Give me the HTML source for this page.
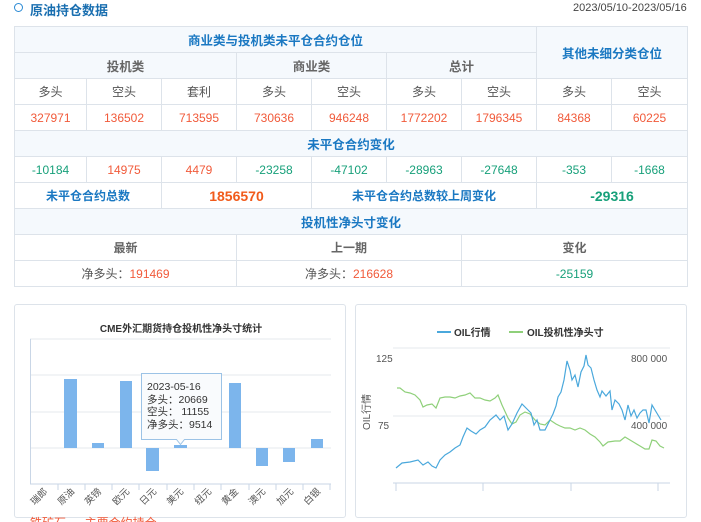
<!DOCTYPE html><html><head><meta charset="utf-8"><style>
*{margin:0;padding:0;box-sizing:border-box}
body{width:701px;height:522px;background:#fff;font-family:"Liberation Sans","Noto Sans CJK SC",sans-serif;position:relative;overflow:hidden}
.t{position:absolute;left:14px;top:26px;border-collapse:collapse;table-layout:fixed}
.t td{border:1px solid #dde3ea;height:26px;text-align:center;font-size:12px;color:#555;padding:0}
.t td.h{background:#f5f9fd;color:#1a78c2;font-weight:bold;font-size:12.5px}
.t td.hg{background:#f5f9fd;color:#666;font-weight:bold;font-size:12.5px}
.t td.g{color:#666;font-weight:bold}
.t td.r,.r{color:#f15a3a}
.t td.gr{color:#17a07a}
.box{position:absolute;border:1px solid #dde3ea;border-radius:3px;background:#fff}
</style></head><body>
<div style="position:absolute;left:14px;top:3px;width:9px;height:9px;border:1.5px solid #2a8ad4;border-radius:50%"></div>
<div style="position:absolute;left:30px;top:0;font-size:13px;font-weight:bold;color:#1a6fb0">原油持仓数据</div>
<div style="position:absolute;left:573px;top:2px;font-size:11px;color:#444">2023/05/10-2023/05/16</div>
<table class="t">
<colgroup><col style="width:72px"><col style="width:75px"><col style="width:75px"><col style="width:75px"><col style="width:75px"><col style="width:75px"><col style="width:75px"><col style="width:75px"><col style="width:76px"></colgroup>
<tr><td class="h" colspan="7">商业类与投机类未平仓合约仓位</td><td class="h" colspan="2" rowspan="2">其他未细分类仓位</td></tr>
<tr><td class="hg" colspan="3">投机类</td><td class="hg" colspan="2">商业类</td><td class="hg" colspan="2">总计</td></tr>
<tr><td>多头</td><td>空头</td><td>套利</td><td>多头</td><td>空头</td><td>多头</td><td>空头</td><td>多头</td><td>空头</td></tr>
<tr><td class="r">327971</td><td class="r">136502</td><td class="r">713595</td><td class="r">730636</td><td class="r">946248</td><td class="r">1772202</td><td class="r">1796345</td><td class="r">84368</td><td class="r">60225</td></tr>
<tr><td class="h" colspan="9">未平仓合约变化</td></tr>
<tr><td class="gr">-10184</td><td class="r">14975</td><td class="r">4479</td><td class="gr">-23258</td><td class="gr">-47102</td><td class="gr">-28963</td><td class="gr">-27648</td><td class="gr">-353</td><td class="gr">-1668</td></tr>
<tr><td colspan="2" style="color:#1a78c2;font-weight:bold">未平仓合约总数</td><td colspan="2" style="color:#f15a1a;font-weight:bold;font-size:14px">1856570</td><td colspan="3" style="color:#1a78c2;font-weight:bold">未平仓合约总数较上周变化</td><td colspan="2" style="color:#17a07a;font-weight:bold;font-size:14px">-29316</td></tr>
<tr><td class="h" colspan="9">投机性净头寸变化</td></tr>
<tr><td colspan="3" class="g">最新</td><td colspan="3" class="g">上一期</td><td colspan="3" class="g">变化</td></tr>
<tr><td colspan="3">净多头：<span class="r">191469</span></td><td colspan="3">净多头：<span class="r">216628</span></td><td colspan="3" class="gr">-25159</td></tr>
</table>

<div class="box" style="left:14px;top:304px;width:332px;height:214px"></div>
<div class="box" style="left:355px;top:304px;width:332px;height:214px"></div>
<svg style="position:absolute;left:0;top:0" width="701" height="522">
<g font-family="Liberation Sans,Noto Sans CJK SC,sans-serif">
<text x="181" y="332" font-size="10" font-weight="bold" fill="#333" text-anchor="middle">CME外汇期货持仓投机性净头寸统计</text>
<g stroke="#e6e9ee"><line x1="30" y1="339" x2="331" y2="339"/><line x1="30" y1="375" x2="331" y2="375"/><line x1="30" y1="412" x2="331" y2="412"/><line x1="30" y1="448" x2="331" y2="448"/></g>
<line x1="30.5" y1="339" x2="30.5" y2="484" stroke="#c9d6e6"/>
<line x1="30" y1="484" x2="331" y2="484" stroke="#c9d6e6"/>
<g stroke="#c9d6e6"><line x1="58" y1="484" x2="58" y2="490"/><line x1="85" y1="484" x2="85" y2="490"/><line x1="112" y1="484" x2="112" y2="490"/><line x1="139" y1="484" x2="139" y2="490"/><line x1="167" y1="484" x2="167" y2="490"/><line x1="194" y1="484" x2="194" y2="490"/><line x1="221" y1="484" x2="221" y2="490"/><line x1="249" y1="484" x2="249" y2="490"/><line x1="276" y1="484" x2="276" y2="490"/><line x1="303" y1="484" x2="303" y2="490"/><line x1="330" y1="484" x2="330" y2="490"/></g>
<g fill="#7cb5ec">
<rect x="64" y="379" width="13" height="69"/><rect x="92" y="443" width="12" height="5"/><rect x="120" y="381" width="12" height="67"/><rect x="146" y="448" width="13" height="23"/><rect x="174" y="445" width="13" height="3"/><rect x="229" y="383" width="12" height="65"/><rect x="256" y="448" width="12" height="18"/><rect x="283" y="448" width="12" height="14"/><rect x="311" y="439" width="12" height="9"/></g>
<g font-size="9.5" fill="#555">
<text transform="translate(48,492) rotate(-45)" text-anchor="end">瑞郎</text>
<text transform="translate(75,492) rotate(-45)" text-anchor="end">原油</text>
<text transform="translate(102,492) rotate(-45)" text-anchor="end">英镑</text>
<text transform="translate(130,492) rotate(-45)" text-anchor="end">欧元</text>
<text transform="translate(157,492) rotate(-45)" text-anchor="end">日元</text>
<text transform="translate(184,492) rotate(-45)" text-anchor="end">美元</text>
<text transform="translate(212,492) rotate(-45)" text-anchor="end">纽元</text>
<text transform="translate(239,492) rotate(-45)" text-anchor="end">黄金</text>
<text transform="translate(266,492) rotate(-45)" text-anchor="end">澳元</text>
<text transform="translate(294,492) rotate(-45)" text-anchor="end">加元</text>
<text transform="translate(321,492) rotate(-45)" text-anchor="end">白银</text></g>
<path d="M141.5 373.5h80v66h-37l-4 5-4-5h-35z" fill="#f9fbfd" stroke="#9cc3e6"/>
<g font-size="10.5" fill="#333"><text x="147" y="390">2023-05-16</text><text x="147" y="403">多头：20669</text><text x="147" y="415">空头： 11155</text><text x="147" y="428">净多头：9514</text></g>

<line x1="437" y1="332" x2="451" y2="332" stroke="#4aa8dc" stroke-width="2"/>
<text x="454" y="336" font-size="10" font-weight="bold" fill="#333">OIL行情</text>
<line x1="509" y1="332" x2="523" y2="332" stroke="#8fd07a" stroke-width="2"/>
<text x="527" y="336" font-size="10" font-weight="bold" fill="#333">OIL投机性净头寸</text>
<line x1="393" y1="348" x2="670" y2="348" stroke="#e6e9ee"/>
<line x1="393" y1="416" x2="670" y2="416" stroke="#e6e9ee"/>
<line x1="393" y1="483" x2="670" y2="483" stroke="#c9d6e6"/>
<g stroke="#c9d6e6"><line x1="396" y1="483" x2="396" y2="491"/><line x1="483" y1="483" x2="483" y2="491"/><line x1="571" y1="483" x2="571" y2="491"/><line x1="658" y1="483" x2="658" y2="491"/></g>
<g font-size="10" fill="#555"><text x="376" y="362">125</text><text x="378" y="429">75</text><text x="631" y="362">800 000</text><text x="631" y="429">400 000</text>
<text transform="translate(370,430) rotate(-90)">OIL行情</text></g>
<polyline fill="none" stroke="#8fd07a" stroke-width="1.2" points="397,388 400,388 405,392 410,393 415,395 420,400 423,407 427,405 432,404 436,408 440,398 445,397 450,397 455,398 460,396 465,395 470,393 475,398 480,398 485,400 490,401 495,398 498,395 502,405 508,418 512,424 516,422 520,415 525,412 530,414 535,420 540,424 545,425 550,420 556,424 560,426 565,428 570,428 575,430 580,428 585,430 590,434 595,437 600,442 603,446 608,442 615,441 620,441 625,437 630,440 635,443 640,446 645,449 649,449 652,440 656,441 660,446 664,448"/>
<polyline fill="none" stroke="#4aa8dc" stroke-width="1.2" points="396,468 402,463 410,462 418,460 423,465 428,462 432,466 436,468 440,460 445,455 450,452 455,448 460,445 463,437 467,428 471,431 476,434 480,430 485,427 490,420 496,415 500,420 504,416 508,430 512,424 517,413 522,404 527,409 531,413 534,425 537,420 540,430 545,430 550,420 553,414 556,406 558,397 561,392 564,380 567,361 570,370 572,380 575,375 578,387 581,372 584,366 586,355 588,365 591,368 594,380 597,390 600,397 602,391 606,396 610,391 612,410 615,400 619,404 622,410 625,420 628,405 631,416 634,410 637,418 640,413 643,410 646,410 649,423 652,405 655,410 658,415 661,420"/>
<text x="30" y="527" font-size="12" fill="#f15a3a">铁矿石 — 主要合约持仓</text>
</g></svg>
</body></html>
